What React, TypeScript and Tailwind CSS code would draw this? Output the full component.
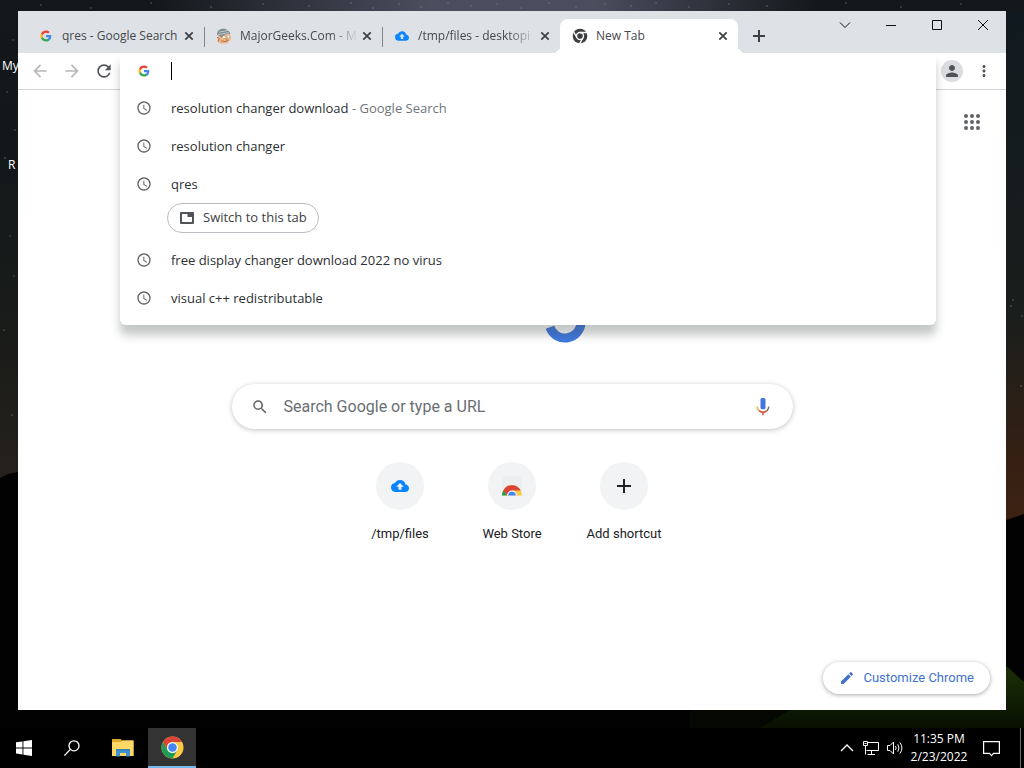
import type { ReactNode } from "react";
import {
  MdAccessTime,
  MdArrowBack,
  MdArrowForward,
  MdBackup,
  MdEdit,
  MdMoreVert,
  MdPerson,
  MdRefresh,
  MdSearch,
} from "react-icons/md";

function GoogleG({ className }: { className: string }) {
  return (
    <svg viewBox="0 0 24 24" className={className} aria-hidden="true">
      <path fill="#4285F4" d="M22.56 12.25c0-.78-.07-1.53-.2-2.25H12v4.26h5.92c-.26 1.37-1.04 2.53-2.21 3.31v2.77h3.57c2.08-1.92 3.28-4.74 3.28-8.09z" />
      <path fill="#34A853" d="M12 23c2.97 0 5.46-.98 7.28-2.66l-3.57-2.77c-.98.66-2.23 1.06-3.71 1.06-2.86 0-5.29-1.93-6.16-4.53H2.18v2.84C3.99 20.53 7.7 23 12 23z" />
      <path fill="#FBBC05" d="M5.84 14.09c-.22-.66-.35-1.36-.35-2.09s.13-1.43.35-2.09V7.07H2.18C1.43 8.55 1 10.22 1 12s.43 3.45 1.18 4.93l2.85-2.22.81-.62z" />
      <path fill="#EA4335" d="M12 5.38c1.62 0 3.06.56 4.21 1.64l3.15-3.15C17.45 2.09 14.97 1 12 1 7.7 1 3.99 3.47 2.18 7.07l3.66 2.84c.87-2.6 3.3-4.53 6.16-4.53z" />
    </svg>
  );
}

function ChromeLogo({ className }: { className: string }) {
  return (
    <svg viewBox="0 0 48 48" className={className} aria-hidden="true">
      <circle cx="24" cy="24" r="23" fill="#FBC943" />
      <path fill="#DB4437" d="M4.1 12.5A23 23 0 0 1 43.9 12.5H24A11.5 11.5 0 0 0 14.04 29.75Z" />
      <path fill="#1E9C57" d="M4.1 12.5A23 23 0 0 0 24 47L33.96 29.75A11.5 11.5 0 0 1 14.04 29.75Z" />
      <circle cx="24" cy="24" r="11.5" fill="#F5F5F5" />
      <circle cx="24" cy="24" r="8.8" fill="#4285F4" />
    </svg>
  );
}

function ChromeMono({ className }: { className: string }) {
  return (
    <svg viewBox="0 0 48 48" className={className} aria-hidden="true">
      <circle cx="24" cy="24" r="22" fill="#3c4043" />
      <circle cx="24" cy="24" r="10.5" fill="none" stroke="#fff" strokeWidth="4" />
      <path d="M24 13.5H45M14.9 29.2 4.4 11M33.1 29.2 22.6 47.4" stroke="#fff" strokeWidth="4" />
    </svg>
  );
}

function GeekFace({ className }: { className: string }) {
  return (
    <svg viewBox="0 0 16 16" className={className} aria-hidden="true">
      <path d="M2 7C3 5.5 13 5 14.5 7.5 15.5 9 15 11 14.5 12L11 15.5 5 15.8 1.5 14Z" fill="#edb78c" />
      <path d="M1 7C1 2.5 4 .8 7.5.8S14 3.5 14.3 6L9.5 6.3 5.5 9.5 3.6 7.8Z" fill="#7f8d91" />
      <path d="M3 4.2 12 2.4M1.8 6.6 13 4.6" stroke="#c4ced0" strokeWidth=".9" />
      <circle cx="8" cy="9.2" r="1.5" fill="#fff" stroke="#b98a68" strokeWidth=".5" />
      <circle cx="12.4" cy="8.6" r="1.4" fill="#fff" stroke="#b98a68" strokeWidth=".5" />
      <path d="M1 9.2 3.2 10.5 2.4 13.5M5.5 12.8Q9 14.8 12.5 12.2" fill="none" stroke="#b36a48" strokeWidth="1" />
      <path d="M9.5 10.5 11.5 11.8" stroke="#c97c55" strokeWidth="1.2" />
    </svg>
  );
}

function TabIcon({ className }: { className: string }) {
  return (
    <svg viewBox="0 0 16 16" className={className} fill="currentColor" aria-hidden="true">
      <path fillRule="evenodd" d="M2 2H14A1 1 0 0 1 15 3V13A1 1 0 0 1 14 14H2A1 1 0 0 1 1 13V3A1 1 0 0 1 2 2ZM3 4V12H13V7H8.5V4Z" />
    </svg>
  );
}

function Cross({ className }: { className: string }) {
  return (
    <svg viewBox="0 0 16 16" className={className} aria-hidden="true">
      <path d="M4.3 4.3 11.7 11.7M11.7 4.3 4.3 11.7" stroke="#3c4043" strokeWidth="1.7" />
    </svg>
  );
}

type TabProps = { icon: ReactNode; title: string; active?: boolean; divider?: boolean; faded?: boolean };

function Tab({ icon, title, active, divider, faded }: TabProps) {
  return (
    <div
      className={
        active
          ? "relative flex h-[34px] w-[178px] items-center rounded-t-lg bg-white pl-3"
          : "relative flex h-[34px] w-[178px] items-center pl-3"
      }
    >
      {divider && <span className="absolute top-2 left-0 h-5 w-px bg-[#80868b]" />}
      {active && (
        <>
          <span className="absolute bottom-0 -left-2 size-2 rounded-br-lg bg-[#dee1e6] shadow-[4px_4px_0_#fff] [clip-path:inset(0)]" />
          <span className="absolute -right-2 bottom-0 size-2 rounded-bl-lg bg-[#dee1e6] shadow-[-4px_4px_0_#fff] [clip-path:inset(0)]" />
        </>
      )}
      {icon}
      <button
        type="button"
        className={
          faded
            ? "ml-2 w-[119px] text-left text-xs whitespace-nowrap text-[#45494d] [mask-image:linear-gradient(to_right,#000_75%,transparent)]"
            : "ml-2 w-[119px] text-left text-xs whitespace-nowrap text-[#45494d]"
        }
      >
        {title}
      </button>
      <button type="button" aria-label={"Close " + title}>
        <Cross className="size-4" />
      </button>
    </div>
  );
}

function WindowButton({ label, children }: { label: string; children: ReactNode }) {
  return (
    <button type="button" aria-label={label} className="flex h-7 w-[46px] items-center justify-center">
      <svg viewBox="0 0 12 12" className="size-3" fill="none" stroke="#111" aria-hidden="true">
        {children}
      </svg>
    </button>
  );
}

function Suggestion({ text, note, children }: { text: string; note?: string; children?: ReactNode }) {
  return (
    <li>
      <a href="#suggestion" className="flex h-[38px] items-center pl-4">
        <MdAccessTime className="mr-[19px] size-4 text-[#5f6368]" />
        <span className="pt-0.5">
          {text}
          {note && <span className="text-[#70757a]"> - {note}</span>}
        </span>
      </a>
      {children}
    </li>
  );
}

function Shortcut({ label, children }: { label: string; children: ReactNode }) {
  return (
    <a href="#shortcut" className="flex w-28 flex-col items-center gap-4 text-[13px] leading-4 text-[#202124]">
      <span className="flex size-12 items-center justify-center rounded-full bg-[#f1f3f4]">{children}</span>
      {label}
    </a>
  );
}

const stars = [
  [12, 40], [6, 92], [14, 130], [4, 158], [9, 236], [13, 276], [3, 330], [11, 415], [40, 5], [90, 8],
  [150, 3], [210, 7], [262, 4], [308, 6], [350, 3], [372, 8], [398, 4], [420, 7], [447, 3], [470, 6],
  [496, 4], [520, 8], [548, 3], [575, 7], [604, 4], [630, 6], [655, 3], [688, 7], [728, 4], [766, 6],
  [845, 3], [900, 7], [960, 4], [1012, 300], [1010, 306], [1021, 316], [1020, 386],
];

function Wallpaper() {
  return (
    <svg
      viewBox="0 0 1024 768"
      preserveAspectRatio="none"
      className="absolute inset-0 -z-10 size-full"
      aria-hidden="true"
    >
      <defs>
        <linearGradient id="sky" x2="0" y2="1">
          <stop offset="0" stopColor="#14171b" />
          <stop offset=".3" stopColor="#12181a" />
          <stop offset=".65" stopColor="#181b19" />
          <stop offset="1" stopColor="#25211c" />
        </linearGradient>
        <linearGradient id="milky">
          <stop offset=".15" stopColor="#64647a" stopOpacity="0" />
          <stop offset=".42" stopColor="#64647a" stopOpacity=".7" />
          <stop offset=".58" stopColor="#64647a" stopOpacity=".7" />
          <stop offset=".8" stopColor="#64647a" stopOpacity="0" />
        </linearGradient>
        <linearGradient id="dusk" x2="0" y2="1">
          <stop offset="0" stopColor="#10191f" />
          <stop offset=".6" stopColor="#1a1e1c" />
          <stop offset=".88" stopColor="#352013" />
          <stop offset="1" stopColor="#3d2213" />
        </linearGradient>
        <linearGradient id="grass" x2="0" y2="1">
          <stop offset="0" stopColor="#1b3006" />
          <stop offset="1" stopColor="#081001" />
        </linearGradient>
      </defs>
      <rect width="1024" height="768" fill="#020202" />
      <path d="M0 0H1024V480H0Z" fill="url(#sky)" />
      <path d="M18 480H1006V490H18Z" fill="#020202" />
      <rect width="1024" height="11" fill="url(#milky)" />
      <path d="M1006 11H1024V514L1006 520Z" fill="url(#dusk)" />
      <path d="M0 478 8 474 18 472V490H0Z" fill="#020202" />
      <path d="M1006 666 1024 682V728H690L760 710H1006Z" fill="url(#grass)" />
      <path d="M690 710H790L760 728H690Z" fill="#050802" />
      {stars.map(([x, y]) => (
        <path key={x + "-" + y} d={`M${x} ${y}h2`} stroke="#8b8fa0" strokeOpacity=".5" />
      ))}
    </svg>
  );
}

function TaskButton({ label, active, children }: { label: string; active?: boolean; children: ReactNode }) {
  return (
    <button
      type="button"
      aria-label={label}
      className={
        active
          ? "flex w-12 items-center justify-center border-b-2 border-[#76b9ed] bg-[#333333]"
          : "flex w-12 items-center justify-center"
      }
    >
      {children}
    </button>
  );
}

function Taskbar() {
  return (
    <footer className="flex h-10 justify-between bg-black text-white">
      <div className="flex">
        <TaskButton label="Start">
          <svg viewBox="0 0 16 16" className="size-4" fill="#fff" aria-hidden="true">
            <path d="M0 2.3 6.5 1.4V7.5H0ZM7.4 1.3 16 0V7.5H7.4ZM0 8.4H6.5V14.5L0 13.6ZM7.4 8.4H16V16L7.4 14.7Z" />
          </svg>
        </TaskButton>
        <TaskButton label="Search">
          <svg viewBox="0 0 16 16" className="size-4" fill="none" stroke="#fff" strokeWidth="1.3" aria-hidden="true">
            <circle cx="10" cy="5.8" r="5" />
            <path d="M6.4 9.4.4 15.6" />
          </svg>
        </TaskButton>
        <TaskButton label="File Explorer">
          <svg viewBox="0 0 22 18" className="ml-1.5 h-[18px] w-[22px]" aria-hidden="true">
            <path d="M0 0H8.5L10 1.5H21.5V17H0Z" fill="#e0a92b" />
            <path d="M0 3H9L10.5 1.5H21.5V17H0Z" fill="#ffd766" />
            <path d="M4 17.6V10.2H18V17.6H14V14H8V17.6Z" fill="#3f93cf" />
            <path d="M4 10.2H18V11.6H4Z" fill="#2d7db8" />
          </svg>
        </TaskButton>
        <div className="ml-1 flex">
          <TaskButton label="Google Chrome" active>
            <ChromeLogo className="size-[23px]" />
          </TaskButton>
        </div>
      </div>
      <div className="flex items-center">
        <button type="button" aria-label="Show hidden icons" className="flex w-6 justify-center">
          <svg viewBox="0 0 14 8" className="h-2 w-3.5" fill="none" stroke="#fff" strokeWidth="1.4" aria-hidden="true">
            <path d="M1 7 7 1 13 7" />
          </svg>
        </button>
        <button type="button" aria-label="Network" className="flex w-6 justify-center">
          <svg viewBox="0 0 16 14" className="h-3.5 w-4" fill="none" stroke="#fff" aria-hidden="true">
            <path d="M5 1.5H15.5V9.5H3.5M4.5 13.5H12M8.5 9.5V13M2.5 5V13.5" />
            <path d="M.5.5H4.5V4.5H.5ZM1.5 2.5H3.5" />
          </svg>
        </button>
        <button type="button" aria-label="Volume" className="flex w-6 justify-center">
          <svg viewBox="0 0 17 14" className="h-3.5 w-[17px]" fill="none" stroke="#fff" aria-hidden="true">
            <path d="M.5 4.5H3L6.5 1V13L3 9.5H.5Z" />
            <path d="M8.5 5Q9.8 7 8.5 9M10.8 3.3Q13.2 7 10.8 10.7M13 1.5Q16.8 7 13 12.5" />
          </svg>
        </button>
        <button type="button" className="w-16 text-center text-xs leading-[18px]">
          11:35 PM
          <br />
          2/23/2022
        </button>
        <button type="button" aria-label="Notifications" className="mr-1 flex w-10 justify-center">
          <svg viewBox="0 0 17 17" className="size-[17px]" fill="none" stroke="#fff" strokeWidth="1.2" aria-hidden="true">
            <path d="M.6 1.6H16.4V13.4H10.5L8.5 15.6 6.5 13.4H.6Z" />
          </svg>
        </button>
        <span className="mr-[3px] ml-[5px] h-full w-px bg-[#6b6b6b]" />
      </div>
    </footer>
  );
}

export default function App() {
  return (
    <div className="relative isolate flex min-h-screen flex-col font-['Open_Sans','Noto_Sans',sans-serif]">
      <Wallpaper />
      <span className="absolute top-[58px] left-0.5 -z-10 text-xs leading-4 text-white">My</span>
      <span className="absolute top-[157px] left-2 -z-10 text-xs leading-4 text-white">R</span>

      <main className="flex flex-1 flex-col px-[18px] pt-[11px] pb-[18px]">
        <div className="flex flex-1 flex-col bg-white">
          <header className="flex h-[42px] bg-[#dee1e6]">
            <div className="flex flex-1 items-end pl-2">
              <Tab icon={<GoogleG className="mx-0.5 size-3" />} title="qres - Google Search" />
              <Tab icon={<GeekFace className="size-4" />} title="MajorGeeks.Com - M" divider faded />
              <Tab icon={<MdBackup className="mx-px size-3.5 text-[#0a84ff]" />} title="/tmp/files - desktopi" divider faded />
              <Tab icon={<ChromeMono className="size-4" />} title="New Tab" active />
              <button type="button" aria-label="New tab" className="mb-[3px] ml-[7px] flex size-7 items-center justify-center">
                <svg viewBox="0 0 12 12" className="size-3" stroke="#3c4043" strokeWidth="2" aria-hidden="true">
                  <path d="M6 0V12M0 6H12" />
                </svg>
              </button>
            </div>
            <div className="flex">
              <WindowButton label="Search tabs"><path d="M1 3.5 6 8.5 11 3.5" /></WindowButton>
              <WindowButton label="Minimize"><path d="M1 6.5H11" /></WindowButton>
              <WindowButton label="Maximize"><path d="M1.5 1.5H10.5V10.5H1.5Z" /></WindowButton>
              <WindowButton label="Close window"><path d="M1 1 11 11M11 1 1 11" /></WindowButton>
            </div>
          </header>

          <div className="relative z-10 flex h-[37px] items-center border-b border-[#d4d6d9] px-1.5">
            <button type="button" aria-label="Back" className="flex w-8 justify-center text-[#b6b8ba]">
              <MdArrowBack className="size-5" />
            </button>
            <button type="button" aria-label="Forward" className="flex w-8 justify-center text-[#b6b8ba]">
              <MdArrowForward className="size-5" />
            </button>
            <button type="button" aria-label="Reload" className="flex w-8 justify-center text-[#505357]">
              <MdRefresh className="size-5" />
            </button>
            <div className="relative h-full flex-1">
              <div className="absolute inset-x-0 top-0 rounded-b-md bg-white pb-2 text-[13px] text-[#2c2f33] shadow-[0_10px_10px_rgba(60,70,68,0.3)] [clip-path:inset(0_-16px_-24px_-16px)]">
                <div className="flex h-9 items-center pl-[18px]">
                  <GoogleG className="mr-5 size-3" />
                  <span className="ml-px h-[18px] w-px bg-black" />
                  <input
                    type="text"
                    aria-label="Address and search bar"
                    className="h-full flex-1 bg-transparent outline-none"
                  />
                </div>
                <ul>
                  <Suggestion text="resolution changer download" note="Google Search" />
                  <Suggestion text="resolution changer" />
                  <Suggestion text="qres">
                    <button
                      type="button"
                      className="mb-2 ml-[47px] flex h-[30px] items-center gap-2 rounded-full border border-[#b9bcc0] px-[11px] text-[#3c4043]"
                    >
                      <TabIcon className="size-4 text-[#505357]" />
                      Switch to this tab
                    </button>
                  </Suggestion>
                  <Suggestion text="free display changer download 2022 no virus" />
                  <Suggestion text="visual c++ redistributable" />
                </ul>
              </div>
            </div>
            <button type="button" aria-label="Profile" className="flex w-8 justify-center">
              <span className="flex size-[22px] items-center justify-center rounded-full bg-[#dadce0] text-[#505357]">
                <MdPerson className="size-[18px]" />
              </span>
            </button>
            <button type="button" aria-label="Chrome menu" className="flex w-8 justify-center text-[#505357]">
              <MdMoreVert className="size-[18px]" />
            </button>
          </div>

          <section className="flex flex-1 flex-col items-center font-[Roboto,sans-serif]">
            <button type="button" aria-label="Google apps" className="mt-6 mr-[26px] self-end">
              <svg viewBox="0 0 16 16" className="size-4" fill="#5f6368" aria-hidden="true">
                {[2, 8, 14].map((y) => [2, 8, 14].map((x) => <circle key={x + "-" + y} cx={x} cy={y} r="2" />))}
              </svg>
            </button>
            <svg viewBox="0 0 44 44" className="mt-[171px] ml-[106px] size-11" aria-hidden="true">
              <path d="M6.9 26.3A16 16 0 0 0 38 21" fill="none" stroke="#3f78df" strokeWidth="9" />
            </svg>
            <label className="mt-[39px] flex h-[45px] w-full max-w-[561px] items-center rounded-full bg-white pr-[21px] pl-[19px] shadow-[0_1px_5px_rgba(32,33,36,0.28)]">
              <MdSearch className="mr-[15px] size-[18px] text-[#5f6368]" />
              <input
                type="text"
                aria-label="Search Google or type a URL"
                placeholder="Search Google or type a URL"
                className="flex-1 bg-transparent text-base outline-none placeholder:text-[#6a6e73]"
              />
              <svg viewBox="0 0 18 18" className="size-[18px]" fill="none" aria-hidden="true">
                <rect x="6.5" y="0" width="5" height="11.2" rx="1.5" fill="#4474e0" />
                <path d="M3.2 8.6A5.8 5.8 0 0 0 5 12.6" stroke="#e5b52a" strokeWidth="1.5" />
                <path d="M5 12.6Q9 16 13 12.6" stroke="#dc4f42" strokeWidth="1.5" />
                <path d="M13 12.6A5.8 5.8 0 0 0 14.8 8.6" stroke="#5b7f58" strokeWidth="1.5" />
                <path d="M9 14V17.2" stroke="#c4593a" strokeWidth="1.5" />
              </svg>
            </label>
            <nav aria-label="Shortcuts" className="mt-[33px] flex">
              <Shortcut label="/tmp/files"><MdBackup className="size-[18px] text-[#0a84ff]" /></Shortcut>
              <Shortcut label="Web Store">
                <svg viewBox="0 0 24 24" className="size-6" aria-hidden="true">
                  <path d="M3 2H21L22 21.5H2Z" fill="#eceff0" />
                  <path d="M2 21.5A10 10.5 0 0 1 22 21.5Z" fill="#fbc943" />
                  <path d="M3.3 16.5A10 10.5 0 0 1 20.7 16.5H12L7 21.5Z" fill="#db4437" />
                  <path d="M2 21.5A10 10.5 0 0 1 3.3 16.5L7 21.5Z" fill="#1e9c57" />
                  <path d="M7 21.5A5 5 0 0 1 17 21.5Z" fill="#f1f3f4" />
                  <path d="M8.2 21.5A3.8 3.8 0 0 1 15.8 21.5Z" fill="#4285f4" />
                </svg>
              </Shortcut>
              <Shortcut label="Add shortcut">
                <svg viewBox="0 0 14 14" className="size-3.5" stroke="#202124" strokeWidth="2" aria-hidden="true">
                  <path d="M7 0V14M0 7H14" />
                </svg>
              </Shortcut>
            </nav>
            <button
              type="button"
              className="mt-auto mr-4 mb-4 flex h-8 items-center gap-2 self-end rounded-full bg-white px-4 text-[13px] text-[#4272d0] shadow-[0_1px_4px_rgba(60,64,67,0.45)]"
            >
              <MdEdit className="size-4" />
              Customize Chrome
            </button>
          </section>
        </div>
      </main>
      <Taskbar />
    </div>
  );
}
